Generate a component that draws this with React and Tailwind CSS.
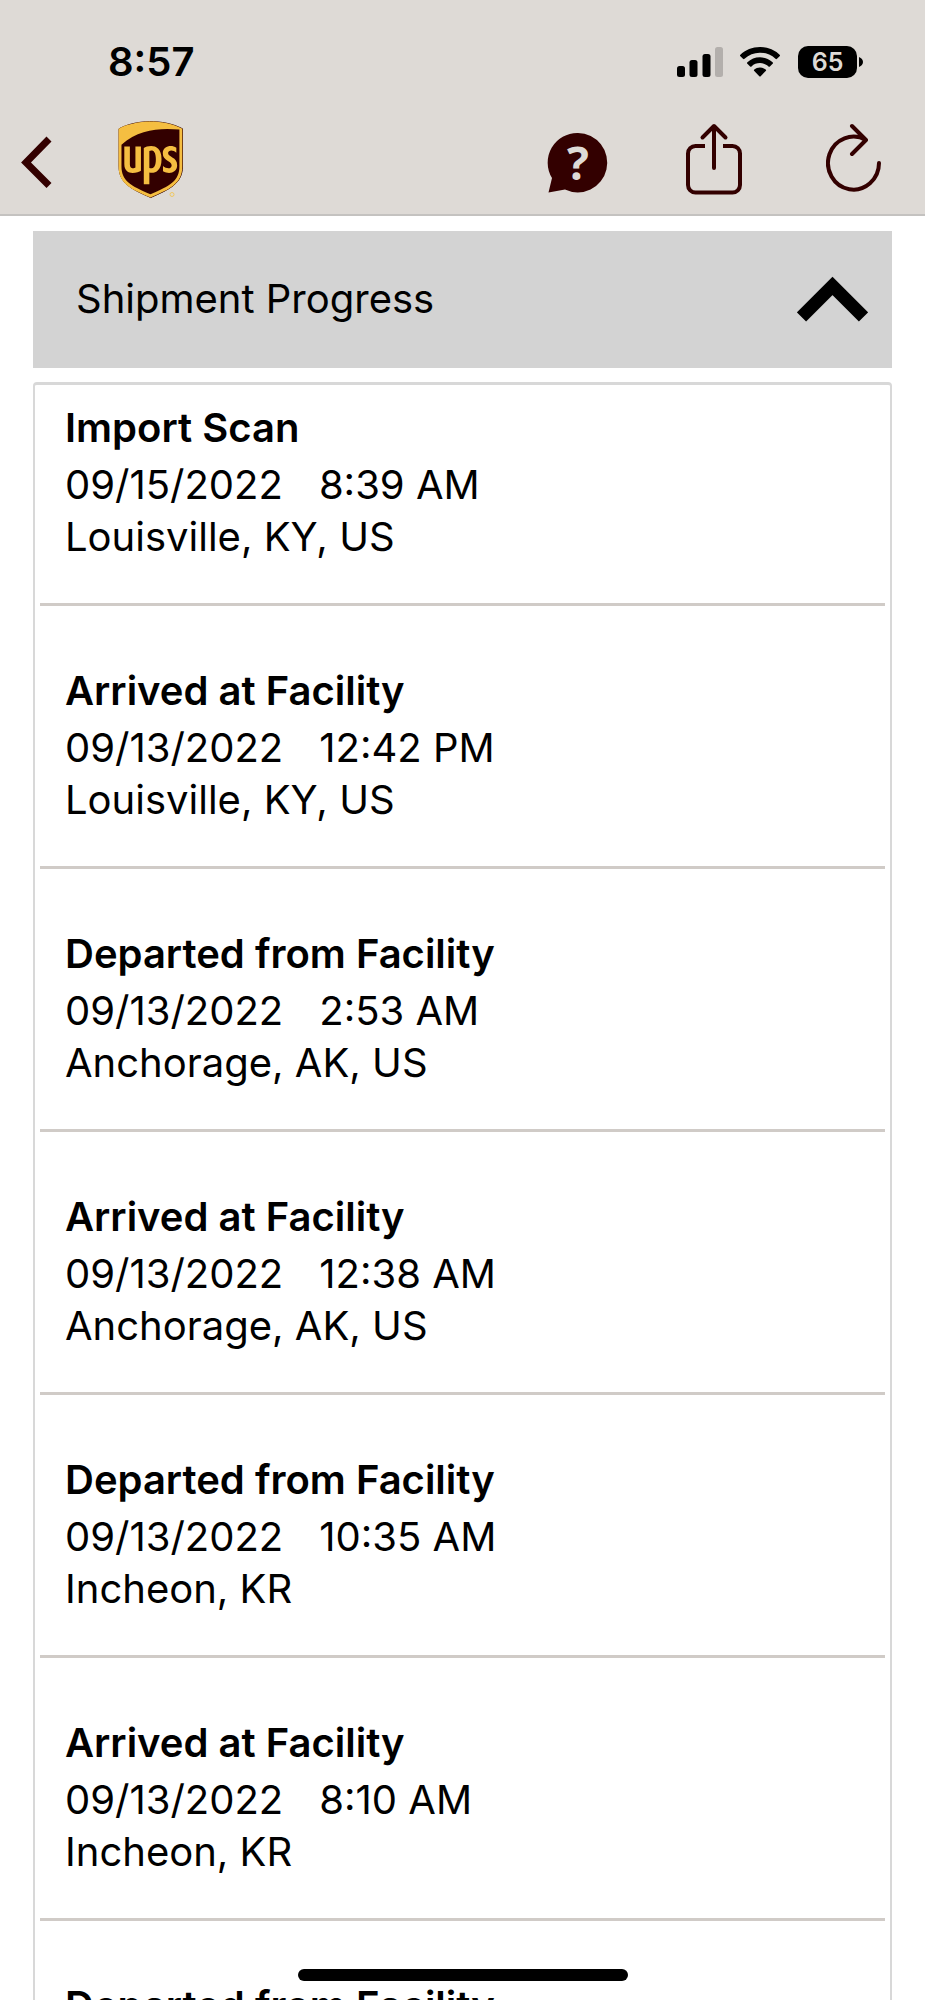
import React, { useState } from 'react';
import { FaUps } from 'react-icons/fa';

const events = [
  { title: 'Import Scan', date: '09/15/2022', time: '8:39 AM', place: 'Louisville, KY, US' },
  { title: 'Arrived at Facility', date: '09/13/2022', time: '12:42 PM', place: 'Louisville, KY, US' },
  { title: 'Departed from Facility', date: '09/13/2022', time: '2:53 AM', place: 'Anchorage, AK, US' },
  { title: 'Arrived at Facility', date: '09/13/2022', time: '12:38 AM', place: 'Anchorage, AK, US' },
  { title: 'Departed from Facility', date: '09/13/2022', time: '10:35 AM', place: 'Incheon, KR' },
  { title: 'Arrived at Facility', date: '09/13/2022', time: '8:10 AM', place: 'Incheon, KR' },
  { title: 'Departed from Facility', date: '09/13/2022', time: '', place: '' }
];

const StatusBar = () => (
  <div className="flex h-[50px] items-center justify-between pl-[108px] pr-[62px]">
    <span className="text-[40px] font-semibold leading-[50px]">8:57</span>
    <div className="flex items-center">
      <svg width="46" height="32" viewBox="0 0 46 32" aria-label="Signal">
        <rect x="0" y="20" width="8" height="11" rx="2.5" />
        <rect x="12.5" y="14" width="8" height="17" rx="2.5" />
        <rect x="25.5" y="8" width="8" height="23" rx="2.5" />
        <rect x="38" y="1" width="8" height="30" rx="2.5" fill="#b3afac" />
      </svg>
      <svg className="ml-[17px]" width="40" height="32" viewBox="0 0 40 32" aria-label="Wi-Fi">
        <path d="M20 1C12.3 1 5.300 4 .4 8.800a1 1 0 0 0 0 1.500l2.600 2.500a1 1 0 0 0 1.500 0A22.500 22.500 0 0 1 20 6.800a22.500 22.500 0 0 1 15.500 6 1 1 0 0 0 1.500 0l2.600-2.500a1 1 0 0 0 0-1.500A28 28 0 0 0 20 1z" />
        <path d="M20 11.300c-4.900 0-9.300 1.900-12.600 5a1 1 0 0 0 0 1.500l2.700 2.600a1 1 0 0 0 1.400 0A12.500 12.500 0 0 1 20 17.100c3.300 0 6.300 1.300 8.500 3.300a1 1 0 0 0 1.400 0l2.700-2.600a1 1 0 0 0 0-1.500 18.300 18.300 0 0 0-12.600-5z" />
        <path d="M20 21.500c-2.200 0-4.200.8-5.700 2a1 1 0 0 0 0 1.500l5 5.200a1 1 0 0 0 1.400 0l5-5.200a1 1 0 0 0 0-1.500 9 9 0 0 0-5.700-2z" />
      </svg>
      <div className="ml-[18px] flex items-center gap-[2px]">
        <span className="flex h-8 w-[59px] items-center justify-center rounded-[10px] bg-black text-[25px] font-semibold leading-8 text-[#dedad6]">
          65
        </span>
        <svg width="4" height="10" viewBox="0 0 4 10" aria-hidden="true">
          <path d="M0 0c2.500 1 4 2.700 4 5s-1.500 4-4 5z" />
        </svg>
      </div>
    </div>
  </div>
);

const UpsLogo = () => (
  <svg width="68" height="80" viewBox="0 0 68 80" aria-label="UPS" className="overflow-visible">
    <path
      d="M1 9.800C17 1 45 -.5 64.500 9.800V47C64.500 64.500 52 70 32.700 78.500 13.500 70 1 64.500 1 47z"
      fill="#330000"
      stroke="#330000"
      strokeWidth="1"
    />
    <FaUps size={87} x="-11" y="-3" color="#f5be41" />
    <circle cx="54" cy="75.500" r="2" fill="none" stroke="#f0c860" strokeWidth="1" />
  </svg>
);

const NavBar = () => (
  <nav className="flex h-[127px] items-start justify-between pl-5 pr-[43px] pt-8">
    <div className="flex gap-[64px]">
      <button aria-label="Back">
        <svg width="34" height="80" viewBox="0 0 34 80" fill="none" stroke="#330000" strokeWidth="7">
          <path d="M29 20 6 43.500 29 66.500" />
        </svg>
      </button>
      <UpsLogo />
    </div>
    <div className="flex gap-20">
      <button aria-label="Help">
        <svg width="60" height="80" viewBox="0 0 60 80" className="overflow-visible">
          <path d="M32 14a29.500 29.700 0 1 1-13 56.500L2.500 73.500 6 59A29.600 29.600 0 0 1 32 14z" fill="#330000" />
          <text x="32" y="61" textAnchor="middle" fill="#dedad6" className="font-['Open_Sans'] text-[46px] font-bold">
            ?
          </text>
        </svg>
      </button>
      <button aria-label="Share">
        <svg
          width="60"
          height="80"
          viewBox="0 0 60 80"
          fill="none"
          stroke="#330000"
          strokeWidth="4"
        >
          <path d="M19 27H9.500a7.500 7.500 0 0 0-7.500 7.500v31.500a7.500 7.500 0 0 0 7.500 7.500h37a7.500 7.500 0 0 0 7.500-7.500v-31.500a7.500 7.500 0 0 0-7.500-7.500H37" />
          <path d="M28 49V8M16.500 18.500 28 7l11.500 11.500" strokeLinecap="round" strokeLinejoin="round" />
        </svg>
      </button>
      <button aria-label="Reload">
        <svg
          width="56"
          height="80"
          viewBox="0 0 56 80"
          fill="none"
          stroke="#330000"
          strokeWidth="4"
          strokeLinecap="round"
          strokeLinejoin="round"
        >
          <path d="M53 44A25.500 26.500 0 1 1 40 21M26 7l14 14-14 14" />
        </svg>
      </button>
    </div>
  </nav>
);

const TrackingEvent = ({ event }) => (
  <li className="border-b-[3px] border-[#d0cbc7] px-[25px] pb-10 pt-[59px] text-[40px] leading-[52px] first:pt-[17px]">
    <h2 className="mb-[5px] font-semibold">{event.title}</h2>
    <p className="flex gap-9">
      <time>{event.date}</time>
      <span>{event.time}</span>
    </p>
    <p>{event.place}</p>
  </li>
);

const App = () => {
  const [open, setOpen] = useState(true);

  return (
    <div className="flex h-screen flex-col overflow-hidden bg-white font-['Inter',sans-serif] text-black">
      <header className="shrink-0 border-b-2 border-[#c4c2c0] bg-[#dedad6] pt-[37px]">
        <StatusBar />
        <NavBar />
      </header>

      <main className="min-h-0 flex-1 overflow-hidden px-[33px] pt-[15px]">
        <button
          onClick={() => setOpen((value) => !value)}
          aria-expanded={open}
          className="flex h-[137px] w-full items-center justify-between bg-[#d3d3d3] pb-[2px] pl-[43px] pr-6 text-left text-[40px] leading-[52px]"
        >
          <span>Shipment Progress</span>
          <svg width="71" height="46" viewBox="0 0 71 46" fill="none" stroke="#000" strokeWidth="13">
            <path d="M4.500 41 35.500 10l31 31" />
          </svg>
        </button>

        {open && (
          <ul className="mt-[14px] rounded-t-sm border-x-2 border-t-[3px] border-[#d8d8d8] px-[5px]">
            {events.map((event, index) => (
              <TrackingEvent key={index} event={event} />
            ))}
          </ul>
        )}
      </main>

      <div className="fixed bottom-[19px] left-1/2 h-3 w-[330px] -translate-x-1/2 rounded-full bg-black" />
    </div>
  );
};

export default App;
